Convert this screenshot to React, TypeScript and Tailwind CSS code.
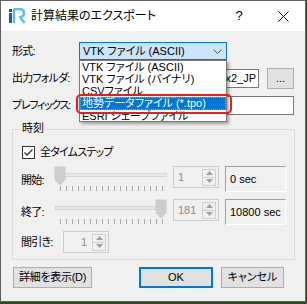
import React from "react";

const F = "font-['Liberation_Sans','Noto_Sans_CJK_JP',sans-serif] [font-feature-settings:'palt']";

function SpinArrows() {
  return (
    <div className="w-[14px] h-[17px] border border-[#d0d0d0] flex flex-col shrink-0">
      <div className="flex-1 flex items-center justify-center border-b border-[#d0d0d0]">
        <svg width="7" height="4" viewBox="0 0 7 4">
          <path d="M0 4 L3.5 0 L7 4 Z" fill="#a0a0a0" />
        </svg>
      </div>
      <div className="flex-1 flex items-center justify-center">
        <svg width="7" height="4" viewBox="0 0 7 4">
          <path d="M0 0 L7 0 L3.5 4 Z" fill="#a0a0a0" />
        </svg>
      </div>
    </div>
  );
}

function Spin({ value, right }: { value: string; right?: boolean }) {
  return (
    <div className="w-[46px] h-[22px] border border-[#cccccc] bg-[#f0f0f0] flex items-center shrink-0">
      <div
        className={
          "flex-1 text-[11px] leading-[13px] text-[#8a8a8a] " +
          (right ? "text-right pr-[5px]" : "pl-[4px]")
        }
      >
        {value}
      </div>
      <div className="mr-[2px]">
        <SpinArrows />
      </div>
    </div>
  );
}

function Slider({ right }: { right?: boolean }) {
  const tx = right ? 101 : 0;
  const ticks = [];
  for (let i = 0; i < 18; i++) {
    const x = 6 + i * 6 + 0.5;
    ticks.push(<line key={i} x1={x} y1={20} x2={x} y2={25} stroke="#a8a8a0" strokeWidth="1" />);
  }
  return (
    <svg width="114" height="26" viewBox="0 0 114 26" className="shrink-0">
      <rect x="1.5" y="7.5" width="111" height="3" fill="#e7e7e7" stroke="#d6d6d6" />
      <path
        d={`M${tx + 0.5} 0.5 H${tx + 11.5} V14 L${tx + 6} 19.5 L${tx + 0.5} 14 Z`}
        fill="#cdcdcd"
      />
      {ticks}
    </svg>
  );
}

function Logo() {
  return (
    <svg width="17" height="16" viewBox="0 0 17 16">
      <rect x="0" y="1" width="3" height="3" fill="#1e5aa8" />
      <rect x="0" y="5" width="3" height="10" fill="#1e5aa8" />
      <path
        d="M5 15 V2.5 Q5 1 7 1 H10.5 Q15 1 15 5 Q15 8.5 11 9 L15.5 15"
        fill="none"
        stroke="#56c0e6"
        strokeWidth="2.4"
        strokeLinejoin="round"
      />
    </svg>
  );
}

const LBL = "leading-[13px] whitespace-nowrap tracking-[-0.8px]";

export default function App() {
  return (
    <div className={"w-[307px] h-[304px] bg-[#2f4a26] " + F}>
      <div className="relative w-[306px] h-[302px] border border-[#5f5f5f] bg-[#f0f0f0] flex flex-col text-black">
        {/* Title bar */}
        <div className="h-[30px] bg-white flex items-center pl-[8px] shrink-0">
          <Logo />
          <div className="ml-[5px] text-[12px] leading-[14px] -mt-[1px] whitespace-nowrap">計算結果のエクスポート</div>
          <div className="flex-1" />
          <div className="w-[44px] h-full flex items-center justify-center text-[13px] -mt-[1px]">?</div>
          <div className="w-[44px] h-full flex items-center justify-center">
            <svg width="11" height="11" viewBox="0 0 11 11">
              <path d="M0.5 0.5 L10.5 10.5 M10.5 0.5 L0.5 10.5" stroke="#111" strokeWidth="1" />
            </svg>
          </div>
        </div>

        {/* Body */}
        <div className="flex flex-col pl-[11px] pt-[11px] text-[11px]">
          {/* 形式 */}
          <div className="flex items-center h-[18px]">
            <div className={"w-[67px] " + LBL}>形式:</div>
            <div className="w-[148px] h-[18px] border border-[#0078d7] bg-[#cce4f7] flex items-center pl-[3px] pr-[4px]">
              <div className="flex-1 leading-[13px] whitespace-nowrap">VTK ファイル (ASCII)</div>
              <svg width="9" height="5" viewBox="0 0 9 5">
                <path d="M0.5 0.5 L4.5 4.5 L8.5 0.5" fill="none" stroke="#606060" strokeWidth="1" />
              </svg>
            </div>
          </div>

          {/* 出力フォルダ */}
          <div className="flex items-center h-[21px] mt-[8px]">
            <div className={"w-[67px] " + LBL}>出力フォルダ:</div>
            <div className="w-[180px] h-[19px] border border-[#7a7a7a] bg-white flex items-center justify-end pr-[2px] overflow-hidden">
              <div className="leading-[13px] whitespace-nowrap">x2_JP</div>
            </div>
            <div className="ml-[8px] w-[27px] h-[21px] border border-[#adadad] bg-[#e1e1e1] flex items-center justify-center leading-[13px]">
              ...
            </div>
          </div>

          {/* プレフィックス */}
          <div className="flex items-center h-[19px] mt-[7px]">
            <div className="w-[67px] leading-[13px] whitespace-nowrap tracking-[-1.3px]">プレフィックス:</div>
            <div className="w-[215px] h-[19px] border border-[#7a7a7a] bg-white" />
          </div>

          {/* 時刻 group */}
          <div className="mt-[14px] w-[283px] border border-[#dcdcdc] flex flex-col pb-[7px]">
            <div className="-mt-[9px] ml-[8px] px-[1px] bg-[#f0f0f0] self-start leading-[14px]">時刻</div>

            <div className="flex items-center h-[13px] mt-[11px] ml-[9px]">
              <div className="w-[13px] h-[13px] border border-[#333333] bg-white flex items-center justify-center">
                <svg width="11" height="11" viewBox="0 0 11 11">
                  <path d="M1.5 5.5 L4 8 L9.5 2.5" fill="none" stroke="#333" strokeWidth="1.3" />
                </svg>
              </div>
              <div className={"ml-[5px] " + LBL}>全タイムステップ</div>
            </div>

            <div className="flex items-start h-[26px] mt-[7px] ml-[8px]">
              <div className={"w-[33px] h-full flex items-center pt-[3px] " + LBL}>開始:</div>
              <Slider />
              <div className="ml-[5px]">
                <Spin value="1" />
              </div>
              <div className="ml-[6px] w-[61px] h-[26px] border-t border-l border-t-[#a0a0a0] border-l-[#a0a0a0] border-b border-r border-b-white border-r-white flex items-center pl-[4px] leading-[13px]">
                0 sec
              </div>
            </div>

            <div className="flex items-start h-[26px] mt-[7px] ml-[8px]">
              <div className={"w-[33px] h-full flex items-center pt-[1px] " + LBL}>終了:</div>
              <Slider right />
              <div className="ml-[5px]">
                <Spin value="181" />
              </div>
              <div className="ml-[6px] w-[61px] h-[26px] border-t border-l border-t-[#a0a0a0] border-l-[#a0a0a0] border-b border-r border-b-white border-r-white flex items-center pl-[4px] leading-[13px]">
                10800 sec
              </div>
            </div>

            <div className="flex items-center h-[20px] mt-[7px] ml-[8px]">
              <div className={"w-[42px] " + LBL}>間引き:</div>
              <Spin value="1" right />
            </div>
          </div>

          {/* Buttons */}
          <div className="flex items-center h-[21px] mt-[7px]">
            <div className="ml-[1px] w-[79px] h-[21px] border border-[#adadad] bg-[#e1e1e1] flex items-center justify-center leading-[13px] whitespace-nowrap tracking-[-0.3px]">
              詳細を表示(D)
            </div>
            <div className="ml-[47px] w-[74px] h-[21px] border-2 border-[#0078d7] bg-[#e1e1e1] flex items-center justify-center leading-[13px]">
              OK
            </div>
            <div className="ml-[8px] w-[63px] h-[21px] border border-[#adadad] bg-[#e1e1e1] flex items-center justify-center leading-[13px] whitespace-nowrap">
              キャンセル
            </div>
          </div>
        </div>

        {/* Dropdown list overlay */}
        <div className="absolute left-[78px] top-[59px] w-[148px] h-[62px] border border-[#7a7a7a] bg-white shadow-[2px_2px_3px_rgba(0,0,0,0.35)] flex flex-col text-[11px] overflow-hidden">
          <div className="h-[12px] leading-[12px] pl-[2px] whitespace-nowrap">VTK ファイル (ASCII)</div>
          <div className="h-[12px] leading-[12px] pl-[2px] whitespace-nowrap">VTK ファイル (バイナリ)</div>
          <div className="h-[12px] leading-[12px] pl-[2px] whitespace-nowrap overflow-hidden">CSVファイル</div>
          <div className="h-[13px] leading-[11px] pl-[1px] bg-[#0078d7] text-white border border-dotted border-[#ff8728] whitespace-nowrap">
            地勢データファイル (*.tpo)
          </div>
          <div className="h-[11px] leading-[12px] pl-[2px] whitespace-nowrap overflow-hidden">ESRI シェープファイル</div>
        </div>

        {/* Red annotation */}
        <div className="absolute left-[75px] top-[93px] w-[156px] h-[20px] border-2 border-[#f01818] rounded-[5px]" />
      </div>
    </div>
  );
}
